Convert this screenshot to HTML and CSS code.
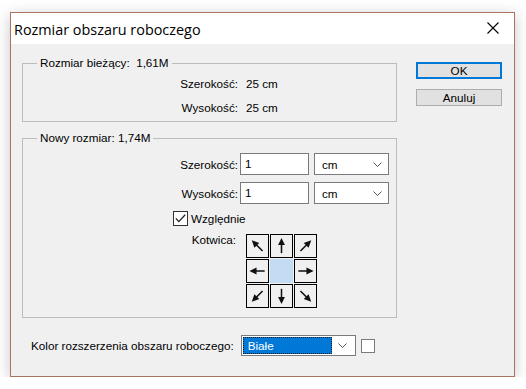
FILE: index.html
```html
<!DOCTYPE html>
<html>
<head>
  <title>Rozmiar obszaru roboczego</title>
  <link rel="stylesheet" href="styles.css">
</head>
<body>
  <div class="dialog">
    <div class="titlebar">
      <span class="title">Rozmiar obszaru roboczego</span>
      <svg class="close" width="12" height="12" viewBox="0 0 12 12">
        <path d="M0.5 0.5 L11.5 11.5 M11.5 0.5 L0.5 11.5" stroke="#000" stroke-width="1.1" fill="none"/>
      </svg>
    </div>

    <div class="content">
      <div class="main">
        <div class="groups">
          <fieldset class="group group-current">
            <legend>Rozmiar bieżący:&nbsp; 1,61M</legend>
            <div class="row">
              <span class="label">Szerokość:</span>
              <span class="value">25 cm</span>
            </div>
            <div class="row">
              <span class="label">Wysokość:</span>
              <span class="value">25 cm</span>
            </div>
          </fieldset>

          <fieldset class="group group-new">
            <legend>Nowy rozmiar: 1,74M</legend>
            <div class="row field-row">
              <span class="label">Szerokość:</span>
              <div class="input">1</div>
              <div class="select">
                <span>cm</span>
                <svg class="chevron" width="9" height="5" viewBox="0 0 9 5"><path d="M0.5 0.5 L4.5 4.5 L8.5 0.5" stroke="#555" fill="none"/></svg>
              </div>
            </div>
            <div class="row field-row">
              <span class="label">Wysokość:</span>
              <div class="input">1</div>
              <div class="select">
                <span>cm</span>
                <svg class="chevron" width="9" height="5" viewBox="0 0 9 5"><path d="M0.5 0.5 L4.5 4.5 L8.5 0.5" stroke="#555" fill="none"/></svg>
              </div>
            </div>
            <div class="row check-row">
              <span class="checkbox">
                <svg width="11" height="9" viewBox="0 0 11 9"><path d="M0.8 4.4 L3.8 7.6 L10.2 0.8" stroke="#222" stroke-width="1.3" fill="none"/></svg>
              </span>
              <span>Względnie</span>
            </div>
            <div class="row anchor-row">
              <span class="label">Kotwica:</span>
              <div class="anchor">
                <div class="cell"><svg viewBox="0 0 22 23"><g transform="rotate(-45 11 11.5)"><path d="M11 19 V9" stroke="#111" stroke-width="1.6"/><path d="M11 3 L7.4 10.5 L14.6 10.5 Z" fill="#111"/></g></svg></div>
                <div class="cell"><svg viewBox="0 0 22 23"><g><path d="M11 19 V9" stroke="#111" stroke-width="1.6"/><path d="M11 3 L7.4 10.5 L14.6 10.5 Z" fill="#111"/></g></svg></div>
                <div class="cell"><svg viewBox="0 0 22 23"><g transform="rotate(45 11 11.5)"><path d="M11 19 V9" stroke="#111" stroke-width="1.6"/><path d="M11 3 L7.4 10.5 L14.6 10.5 Z" fill="#111"/></g></svg></div>
                <div class="cell"><svg viewBox="0 0 22 23"><g transform="rotate(-90 11 11.5)"><path d="M11 19 V9" stroke="#111" stroke-width="1.6"/><path d="M11 3 L7.4 10.5 L14.6 10.5 Z" fill="#111"/></g></svg></div>
                <div class="cell cell-center"></div>
                <div class="cell"><svg viewBox="0 0 22 23"><g transform="rotate(90 11 11.5)"><path d="M11 19 V9" stroke="#111" stroke-width="1.6"/><path d="M11 3 L7.4 10.5 L14.6 10.5 Z" fill="#111"/></g></svg></div>
                <div class="cell"><svg viewBox="0 0 22 23"><g transform="rotate(-135 11 11.5)"><path d="M11 19 V9" stroke="#111" stroke-width="1.6"/><path d="M11 3 L7.4 10.5 L14.6 10.5 Z" fill="#111"/></g></svg></div>
                <div class="cell"><svg viewBox="0 0 22 23"><g transform="rotate(180 11 11.5)"><path d="M11 19 V9" stroke="#111" stroke-width="1.6"/><path d="M11 3 L7.4 10.5 L14.6 10.5 Z" fill="#111"/></g></svg></div>
                <div class="cell"><svg viewBox="0 0 22 23"><g transform="rotate(135 11 11.5)"><path d="M11 19 V9" stroke="#111" stroke-width="1.6"/><path d="M11 3 L7.4 10.5 L14.6 10.5 Z" fill="#111"/></g></svg></div>
              </div>
            </div>
          </fieldset>
        </div>

        <div class="buttons">
          <button class="btn btn-default">OK</button>
          <button class="btn">Anuluj</button>
        </div>
      </div>

      <div class="extension">
        <span>Kolor rozszerzenia obszaru roboczego:</span>
        <div class="select select-color">
          <span class="selected">Białe</span>
          <svg class="chevron" width="9" height="5" viewBox="0 0 9 5"><path d="M0.5 0.5 L4.5 4.5 L8.5 0.5" stroke="#555" fill="none"/></svg>
        </div>
        <span class="swatch"></span>
      </div>
    </div>
  </div>
</body>
</html>
```

FILE: styles.css
```css
/* Canvas size dialog */
body {
  margin: 0;
  padding: 12px 0 0 10px;
  background-color: #fff;
  font-family: "Liberation Sans", Arial, sans-serif;
  font-size: 11.7px;
  color: #000;
}

.dialog {
  width: 503px;
  height: 363px;
  border: 1px solid #a87460;
  background-color: #f0f0f0;
  box-shadow: 0 3px 14px rgba(0, 0, 0, 0.22);
  display: flex;
  flex-direction: column;
}

.titlebar {
  height: 31px;
  background-color: #fff;
  display: flex;
  align-items: center;
  justify-content: space-between;
  padding: 0 15px 0 3px;
}

.title {
  font-family: "Open Sans", sans-serif;
  font-size: 14.4px;
  color: #000;
  padding-top: 1px;
}

.close {
  display: block;
  margin-top: -1px;
}

.content {
  flex: 1;
  padding: 11px 12px 0 11px;
}

.main {
  display: flex;
  gap: 19px;
}

.groups {
  width: 375px;
  display: flex;
  flex-direction: column;
  gap: 8px;
}

.group {
  margin: 0;
  min-width: 0;
  padding: 0 0 2px 0;
  border: 1px solid #bcbcbc;
}

.group legend {
  margin-left: 14px;
  padding: 0 3px;
  line-height: 16px;
}

.row {
  display: flex;
  align-items: center;
  height: 24px;
}

.label {
  width: 215px;
  text-align: right;
  flex-shrink: 0;
}

.value {
  margin-left: 8px;
}

.group-new {
  padding-bottom: 9px;
}

.field-row {
  height: 22px;
  margin-top: 7px;
}

.input {
  width: 63px;
  height: 20px;
  margin-left: 2px;
  border: 1px solid #7a7a7a;
  background-color: #fff;
  padding-left: 4px;
  line-height: 20px;
}

.select {
  display: flex;
  align-items: center;
  justify-content: space-between;
  height: 20px;
  border: 1px solid #7a7a7a;
  background-color: #fff;
}

.field-row .select {
  width: 60px;
  margin-left: 5px;
  padding: 0 6px 0 7px;
}

.chevron {
  display: block;
}

.check-row {
  height: 22px;
  margin-top: 3px;
  padding-left: 150px;
}

.checkbox {
  width: 13px;
  height: 13px;
  border: 1px solid #333;
  background-color: #fff;
  display: flex;
  align-items: center;
  justify-content: center;
  margin-right: 3px;
}

.checkbox svg {
  display: block;
}

.anchor-row {
  height: auto;
  align-items: flex-start;
  margin-top: 5px;
}

.anchor-row .label {
  width: 213px;
  line-height: 16px;
  margin-top: -2px;
}

.anchor {
  display: grid;
  grid-template-columns: repeat(3, 23px);
  grid-template-rows: repeat(3, 24px);
  gap: 1px;
  margin-left: 10px;
}

.cell {
  border: 1px solid #000;
  background-color: #f0f0f0;
}

.cell svg {
  display: block;
  width: 21px;
  height: 22px;
}

.cell-center {
  background-color: #c3dcf4;
  border-color: #c3dcf4;
}

.buttons {
  width: 86px;
  display: flex;
  flex-direction: column;
  gap: 10px;
  padding-top: 7px;
}

.btn {
  height: 17px;
  padding: 0;
  font-family: "Liberation Sans", Arial, sans-serif;
  font-size: 11.7px;
  line-height: 13px;
  color: #000;
  background-color: #e1e1e1;
  border: 1px solid #adadad;
}

.btn-default {
  border: 2px solid #0078d7;
}

.extension {
  display: flex;
  align-items: center;
  margin-top: 17px;
  padding-left: 9px;
}

.select-color {
  width: 113px;
  height: 19px;
  margin-left: 7px;
  padding: 0;
  border-color: #7a7a7a;
}

.selected {
  width: 83px;
  height: 15px;
  margin-left: 1px;
  padding-left: 4px;
  line-height: 15px;
  color: #fff;
  background-color: #0078d7;
  border: 1px dotted #1a1a1a;
}

.select-color .chevron {
  margin-right: 8px;
}

.swatch {
  width: 12px;
  height: 12px;
  margin-left: 5px;
  border: 1px solid #7a7a7a;
  background-color: #fff;
}
```
